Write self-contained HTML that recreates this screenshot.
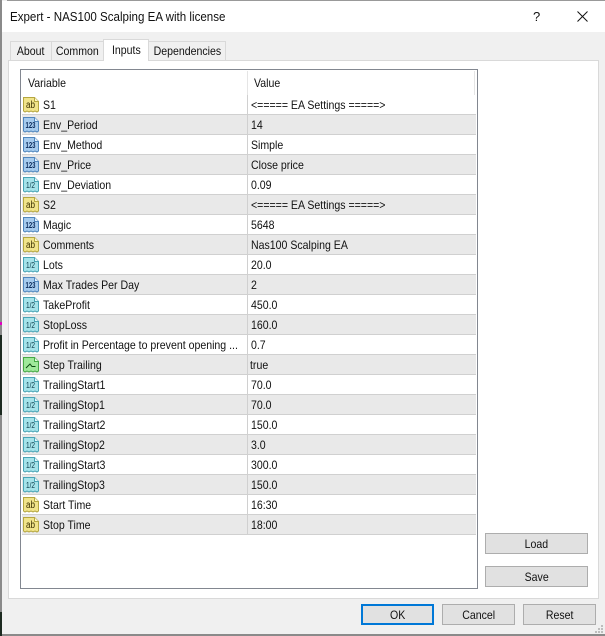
<!DOCTYPE html>
<html><head><meta charset="utf-8"><style>
html,body{margin:0;padding:0;width:605px;height:636px;overflow:hidden;background:#f0f0f0}
body{position:relative;font-family:"Liberation Sans",sans-serif;font-size:12px;color:#111}
div{position:absolute;box-sizing:border-box;white-space:nowrap}
.tab{background:#f0f0f0;border:1px solid #d9d9d9;border-bottom:0;text-align:center;line-height:19px}
.r{left:22px;width:454px;height:20px;background:#fff;border-bottom:1px solid #d0d0d0}
.g{background:#e9e9e9}
.r svg{position:absolute;left:1px;top:2px}
.n,.v,.h{position:absolute;top:1px;line-height:19px;transform:scaleX(.88);transform-origin:0 50%}
.n{left:21px}
.v{left:229px}
.h{top:0}
.t{display:inline-block;transform:scaleX(.88);transform-origin:50% 50%}
.s{position:absolute;left:225px;top:0;width:1px;height:20px;background:#d0d0d0}
.b{background:#e1e1e1;border:1px solid #adadad;text-align:center;line-height:20px}
svg text{font-family:"Liberation Sans",sans-serif}
.ab{font-size:10px;fill:#3a3000}
.i{font-size:8px;font-weight:bold;fill:#0a2a5a}
.f{font-size:8px;fill:#0a3a4a}
</style></head><body>
<svg width="0" height="0" style="position:absolute">
<symbol id="sy" width="17" height="16"><path d="M.5 .5H11.5L15.5 4.5V14L14 15 12 14 10 15 8 14 6 15 4 14 2 15 .5 14Z" fill="#f1e48a" stroke="#b5a63f"/><path d="M11.5 .5V4.5H15.5" fill="#fff8c8" stroke="#b5a63f"/></symbol>
<symbol id="sb" width="17" height="16"><path d="M.5 .5H11.5L15.5 4.5V14L14 15 12 14 10 15 8 14 6 15 4 14 2 15 .5 14Z" fill="#a6cbee" stroke="#4f86bd"/><path d="M11.5 .5V4.5H15.5" fill="#e4f0fb" stroke="#4f86bd"/></symbol>
<symbol id="sc" width="17" height="16"><path d="M.5 .5H11.5L15.5 4.5V14L14 15 12 14 10 15 8 14 6 15 4 14 2 15 .5 14Z" fill="#a5e3ea" stroke="#48a3b5"/><path d="M11.5 .5V4.5H15.5" fill="#e2f8fb" stroke="#48a3b5"/></symbol>
<symbol id="sg" width="17" height="16"><path d="M.5 .5H11.5L15.5 4.5V14L14 15 12 14 10 15 8 14 6 15 4 14 2 15 .5 14Z" fill="#9fe89a" stroke="#45a845"/><path d="M11.5 .5V4.5H15.5" fill="#e0fbdc" stroke="#45a845"/><path d="M3 11L7 7 9 9.5H12.5" fill="none" stroke="#0a4a10"/></symbol>
</svg>
<div style="left:0;top:0;width:2px;height:636px;background:#8a8a8a"></div>
<div style="left:0;top:335px;width:2px;height:80px;background:#1c2a20"></div>
<div style="left:0;top:612px;width:2px;height:24px;background:#1c2a20"></div>
<div style="left:0;top:322px;width:2px;height:3px;background:#e000c0"></div>
<div style="left:7px;top:0;width:598px;height:1px;background:#999"></div>
<div style="left:2px;top:1px;width:603px;height:31px;background:#fff"></div>
<div class="h" style="left:10px;top:8px;font-size:13px;line-height:17px;transform:scaleX(.89)">Expert - NAS100 Scalping EA with license</div>
<div style="left:533px;top:8px;font-size:13px;line-height:17px">?</div>
<svg style="position:absolute;left:577px;top:11px" width="11" height="11"><path d="M.5 .5L10.5 10.5M10.5 .5L.5 10.5" stroke="#111" fill="none"/></svg>

<div style="left:8px;top:60px;width:591px;height:539px;background:#fff;border:1px solid #d9d9d9"></div>
<div class="tab" style="left:10px;top:41px;width:42px;height:19px"><span class="t">About</span></div>
<div class="tab" style="left:51px;top:41px;width:53px;height:19px"><span class="t">Common</span></div>
<div class="tab" style="left:148px;top:41px;width:78px;height:19px"><span class="t">Dependencies</span></div>
<div class="tab" style="left:103px;top:39px;width:46px;height:22px;background:#fff;border-color:#d9d9d9;line-height:20px"><span class="t">Inputs</span></div>

<div style="left:20px;top:69px;width:458px;height:520px;background:#fff;border:1px solid #828790"></div>
<div class="h" style="left:28px;top:74px;line-height:19px">Variable</div>
<div class="h" style="left:254px;top:74px;line-height:19px">Value</div>
<div style="left:247px;top:71px;width:1px;height:24px;background:#e5e5e5"></div>
<div style="left:474px;top:71px;width:1px;height:24px;background:#e5e5e5"></div>

<div class="r" style="top:95px"><svg width="17" height="16"><use href="#sy"/><text x="3" y="11" class="ab" textLength="9" lengthAdjust="spacingAndGlyphs">ab</text></svg><span class="n">S1</span><span class="s"></span><span class="v">&lt;===== EA Settings =====&gt;</span></div>
<div class="r g" style="top:115px"><svg width="17" height="16"><use href="#sb"/><text x="2.5" y="11" class="i" textLength="10" lengthAdjust="spacingAndGlyphs">123</text></svg><span class="n">Env_Period</span><span class="s"></span><span class="v">14</span></div>
<div class="r" style="top:135px"><svg width="17" height="16"><use href="#sb"/><text x="2.5" y="11" class="i" textLength="10" lengthAdjust="spacingAndGlyphs">123</text></svg><span class="n">Env_Method</span><span class="s"></span><span class="v">Simple</span></div>
<div class="r g" style="top:155px"><svg width="17" height="16"><use href="#sb"/><text x="2.5" y="11" class="i" textLength="10" lengthAdjust="spacingAndGlyphs">123</text></svg><span class="n">Env_Price</span><span class="s"></span><span class="v">Close price</span></div>
<div class="r" style="top:175px"><svg width="17" height="16"><use href="#sc"/><text x="3" y="11" class="f" textLength="9" lengthAdjust="spacingAndGlyphs">1/2</text></svg><span class="n">Env_Deviation</span><span class="s"></span><span class="v">0.09</span></div>
<div class="r g" style="top:195px"><svg width="17" height="16"><use href="#sy"/><text x="3" y="11" class="ab" textLength="9" lengthAdjust="spacingAndGlyphs">ab</text></svg><span class="n">S2</span><span class="s"></span><span class="v">&lt;===== EA Settings =====&gt;</span></div>
<div class="r" style="top:215px"><svg width="17" height="16"><use href="#sb"/><text x="2.5" y="11" class="i" textLength="10" lengthAdjust="spacingAndGlyphs">123</text></svg><span class="n">Magic</span><span class="s"></span><span class="v">5648</span></div>
<div class="r g" style="top:235px"><svg width="17" height="16"><use href="#sy"/><text x="3" y="11" class="ab" textLength="9" lengthAdjust="spacingAndGlyphs">ab</text></svg><span class="n" style="left:20.5px">Comments</span><span class="s"></span><span class="v">Nas100 Scalping EA</span></div>
<div class="r" style="top:255px"><svg width="17" height="16"><use href="#sc"/><text x="3" y="11" class="f" textLength="9" lengthAdjust="spacingAndGlyphs">1/2</text></svg><span class="n">Lots</span><span class="s"></span><span class="v">20.0</span></div>
<div class="r g" style="top:275px"><svg width="17" height="16"><use href="#sb"/><text x="2.5" y="11" class="i" textLength="10" lengthAdjust="spacingAndGlyphs">123</text></svg><span class="n">Max Trades Per Day</span><span class="s"></span><span class="v">2</span></div>
<div class="r" style="top:295px"><svg width="17" height="16"><use href="#sc"/><text x="3" y="11" class="f" textLength="9" lengthAdjust="spacingAndGlyphs">1/2</text></svg><span class="n">TakeProfit</span><span class="s"></span><span class="v">450.0</span></div>
<div class="r g" style="top:315px"><svg width="17" height="16"><use href="#sc"/><text x="3" y="11" class="f" textLength="9" lengthAdjust="spacingAndGlyphs">1/2</text></svg><span class="n">StopLoss</span><span class="s"></span><span class="v">160.0</span></div>
<div class="r" style="top:335px"><svg width="17" height="16"><use href="#sc"/><text x="3" y="11" class="f" textLength="9" lengthAdjust="spacingAndGlyphs">1/2</text></svg><span class="n">Profit in Percentage to prevent opening ...</span><span class="s"></span><span class="v">0.7</span></div>
<div class="r g" style="top:355px"><svg width="17" height="16"><use href="#sg"/></svg><span class="n">Step Trailing</span><span class="s"></span><span class="v" style="left:228px">true</span></div>
<div class="r" style="top:375px"><svg width="17" height="16"><use href="#sc"/><text x="3" y="11" class="f" textLength="9" lengthAdjust="spacingAndGlyphs">1/2</text></svg><span class="n">TrailingStart1</span><span class="s"></span><span class="v">70.0</span></div>
<div class="r g" style="top:395px"><svg width="17" height="16"><use href="#sc"/><text x="3" y="11" class="f" textLength="9" lengthAdjust="spacingAndGlyphs">1/2</text></svg><span class="n">TrailingStop1</span><span class="s"></span><span class="v">70.0</span></div>
<div class="r" style="top:415px"><svg width="17" height="16"><use href="#sc"/><text x="3" y="11" class="f" textLength="9" lengthAdjust="spacingAndGlyphs">1/2</text></svg><span class="n">TrailingStart2</span><span class="s"></span><span class="v">150.0</span></div>
<div class="r g" style="top:435px"><svg width="17" height="16"><use href="#sc"/><text x="3" y="11" class="f" textLength="9" lengthAdjust="spacingAndGlyphs">1/2</text></svg><span class="n">TrailingStop2</span><span class="s"></span><span class="v">3.0</span></div>
<div class="r" style="top:455px"><svg width="17" height="16"><use href="#sc"/><text x="3" y="11" class="f" textLength="9" lengthAdjust="spacingAndGlyphs">1/2</text></svg><span class="n">TrailingStart3</span><span class="s"></span><span class="v">300.0</span></div>
<div class="r g" style="top:475px"><svg width="17" height="16"><use href="#sc"/><text x="3" y="11" class="f" textLength="9" lengthAdjust="spacingAndGlyphs">1/2</text></svg><span class="n">TrailingStop3</span><span class="s"></span><span class="v">150.0</span></div>
<div class="r" style="top:495px"><svg width="17" height="16"><use href="#sy"/><text x="3" y="11" class="ab" textLength="9" lengthAdjust="spacingAndGlyphs">ab</text></svg><span class="n">Start Time</span><span class="s"></span><span class="v">16:30</span></div>
<div class="r g" style="top:515px"><svg width="17" height="16"><use href="#sy"/><text x="3" y="11" class="ab" textLength="9" lengthAdjust="spacingAndGlyphs">ab</text></svg><span class="n">Stop Time</span><span class="s"></span><span class="v">18:00</span></div>

<div class="b" style="left:485px;top:533px;width:103px;height:21px"><span class="t">Load</span></div>
<div class="b" style="left:485px;top:566px;width:103px;height:21px"><span class="t">Save</span></div>
<div class="b" style="left:361px;top:604px;width:73px;height:21px;border:2px solid #0078d7;line-height:18px"><span class="t">OK</span></div>
<div class="b" style="left:442px;top:604px;width:73px;height:21px"><span class="t">Cancel</span></div>
<div class="b" style="left:523px;top:604px;width:73px;height:21px"><span class="t">Reset</span></div>
<svg style="position:absolute;left:594px;top:624px" width="11" height="10"><path d="M7 1h2v2H7zM4 4h2v2H4zM7 4h2v2H7zM1 7h2v2H1zM4 7h2v2H4zM7 7h2v2H7z" fill="#bdbdbd"/></svg>
<div style="left:2px;top:634px;width:603px;height:2px;background:#8a8a8a"></div>
</body></html>
